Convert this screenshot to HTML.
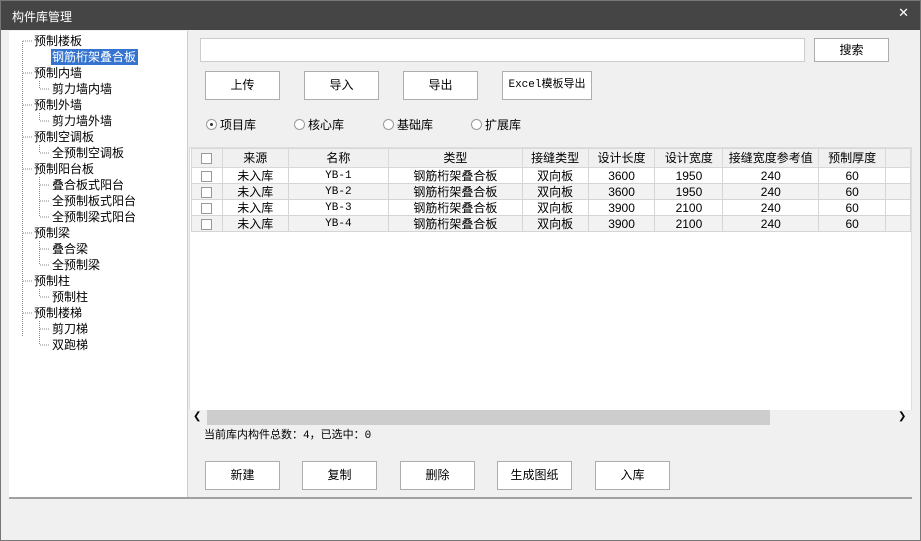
<!DOCTYPE html><html><head><meta charset="utf-8"><style>
*{margin:0;padding:0;box-sizing:border-box}
body{width:921px;height:541px;background:#f0f0f0;font:12px "Liberation Sans","Noto Sans CJK SC",sans-serif;color:#000;position:relative;overflow:hidden}
.a{position:absolute}
.frame{left:0;top:0;width:921px;height:541px;border:1px solid #777;pointer-events:none}
.title{left:0;top:0;width:921px;height:30px;background:#454545;color:#fff;font-size:12px;line-height:14px;padding:10px 0 0 12px}
.tree{left:9px;top:31px;width:179px;height:466px;background:#fff;border-right:1px solid #ccc}
.t{position:absolute;white-space:nowrap;line-height:16px}
.btn{position:absolute;height:29px;background:#fff;border:1px solid #adadad;text-align:center;line-height:27px}
.grid{left:189px;top:147px;width:723px;height:278px;background:#fff;border:1px solid #ddd}
table{border-collapse:collapse;position:absolute;left:1px;top:0px;table-layout:fixed}
td{height:16px;border:1px solid #d5d5d5;text-align:center;font-size:12px;line-height:14px;white-space:nowrap;overflow:hidden}
tr.h td{height:19px;background:#f0f0f0;border-color:#d8d8d8}
tr.g td{background:#f2f2f2}
.cb{display:inline-block;width:11px;height:11px;border:1px solid #999;background:#fff;vertical-align:middle}
.r{position:absolute;width:11px;height:11px;border:1px solid #999;border-radius:50%;background:#fff}
.mono{font-family:"Liberation Mono",monospace;font-size:11px}
</style></head><body>
<div class="a title">构件库管理<span class="a" style="right:12px;top:6px;font-size:13px">✕</span></div>
<div class="a tree">
<svg class="a" style="left:0;top:0" width="60" height="330"><g stroke="#888" stroke-dasharray="1,1" fill="none">
<path d="M13.5 10V306M14 10H24M14 42H24M14 74H24M14 106H24M14 138H24M14 202H24M14 250H24M14 282H24"/>
<path d="M30.5 50V58M31 58H40M30.5 82V90M31 90H40M30.5 114V122M31 122H40M30.5 146V186M31 154H40M31 170H40M31 186H40M30.5 210V234M31 218H40M31 234H40M30.5 258V266M31 266H40M30.5 290V314M31 298H40M31 314H40"/></g></svg>
<div class="t" style="left:25px;top:2px">预制楼板</div>
<div class="t" style="left:42px;top:18px;background:#3474d0;color:#fff;padding:0 2px 0 1px">钢筋桁架叠合板</div>
<div class="t" style="left:25px;top:34px">预制内墙</div>
<div class="t" style="left:43px;top:50px">剪力墙内墙</div>
<div class="t" style="left:25px;top:66px">预制外墙</div>
<div class="t" style="left:43px;top:82px">剪力墙外墙</div>
<div class="t" style="left:25px;top:98px">预制空调板</div>
<div class="t" style="left:43px;top:114px">全预制空调板</div>
<div class="t" style="left:25px;top:130px">预制阳台板</div>
<div class="t" style="left:43px;top:146px">叠合板式阳台</div>
<div class="t" style="left:43px;top:162px">全预制板式阳台</div>
<div class="t" style="left:43px;top:178px">全预制梁式阳台</div>
<div class="t" style="left:25px;top:194px">预制梁</div>
<div class="t" style="left:43px;top:210px">叠合梁</div>
<div class="t" style="left:43px;top:226px">全预制梁</div>
<div class="t" style="left:25px;top:242px">预制柱</div>
<div class="t" style="left:43px;top:258px">预制柱</div>
<div class="t" style="left:25px;top:274px">预制楼梯</div>
<div class="t" style="left:43px;top:290px">剪刀梯</div>
<div class="t" style="left:43px;top:306px">双跑梯</div>
</div>
<div class="a" style="left:9px;top:497px;width:903px;height:2px;background:#a0a0a0"></div>
<div class="a" style="left:200px;top:38px;width:605px;height:24px;background:#fff;border:1px solid #ccc"></div>
<div class="btn" style="left:814px;top:38px;width:75px;height:24px;line-height:22px">搜索</div>
<div class="btn" style="left:205px;top:71px;width:75px">上传</div>
<div class="btn" style="left:304px;top:71px;width:75px">导入</div>
<div class="btn" style="left:403px;top:71px;width:75px">导出</div>
<div class="btn mono" style="left:502px;top:71px;width:90px">Excel模板导出</div>
<div class="r" style="left:206px;top:119px"><span class="a" style="left:3px;top:3px;width:3px;height:3px;background:#333;border-radius:50%"></span></div><div class="t" style="left:220px;top:117px">项目库</div>
<div class="r" style="left:294px;top:119px"></div><div class="t" style="left:308px;top:117px">核心库</div>
<div class="r" style="left:383px;top:119px"></div><div class="t" style="left:397px;top:117px">基础库</div>
<div class="r" style="left:471px;top:119px"></div><div class="t" style="left:485px;top:117px">扩展库</div>
<div class="a grid">
<table>
<colgroup><col width="31"><col width="66"><col width="101"><col width="134"><col width="66"><col width="67"><col width="68"><col width="96"><col width="67"><col width="25"></colgroup>
<tr class="h"><td><span class="cb"></span></td><td>来源</td><td>名称</td><td>类型</td><td>接缝类型</td><td>设计长度</td><td>设计宽度</td><td>接缝宽度参考值</td><td>预制厚度</td><td></td></tr>
<tr><td><span class="cb"></span></td><td>未入库</td><td class="mono">YB-1</td><td>钢筋桁架叠合板</td><td>双向板</td><td>3600</td><td>1950</td><td>240</td><td>60</td><td></td></tr>
<tr class="g"><td><span class="cb"></span></td><td>未入库</td><td class="mono">YB-2</td><td>钢筋桁架叠合板</td><td>双向板</td><td>3600</td><td>1950</td><td>240</td><td>60</td><td></td></tr>
<tr><td><span class="cb"></span></td><td>未入库</td><td class="mono">YB-3</td><td>钢筋桁架叠合板</td><td>双向板</td><td>3900</td><td>2100</td><td>240</td><td>60</td><td></td></tr>
<tr class="g"><td><span class="cb"></span></td><td>未入库</td><td class="mono">YB-4</td><td>钢筋桁架叠合板</td><td>双向板</td><td>3900</td><td>2100</td><td>240</td><td>60</td><td></td></tr>
</table></div>
<div class="a" style="left:189px;top:410px;width:723px;height:15px;background:#f0f0f0"></div>
<div class="a" style="left:207px;top:410px;width:563px;height:15px;background:#cdcdcd"></div>
<div class="t" style="left:193px;top:409px;font-size:10px">❮</div><div class="t" style="left:898px;top:409px;font-size:10px">❯</div>
<div class="t mono" style="left:204px;top:428px;font-size:11px">当前库内构件总数：4，已选中：0</div>
<div class="btn" style="left:205px;top:461px;width:75px">新建</div>
<div class="btn" style="left:302px;top:461px;width:75px">复制</div>
<div class="btn" style="left:400px;top:461px;width:75px">删除</div>
<div class="btn" style="left:497px;top:461px;width:75px">生成图纸</div>
<div class="btn" style="left:595px;top:461px;width:75px">入库</div>
<div class="a frame"></div>
</body></html>
